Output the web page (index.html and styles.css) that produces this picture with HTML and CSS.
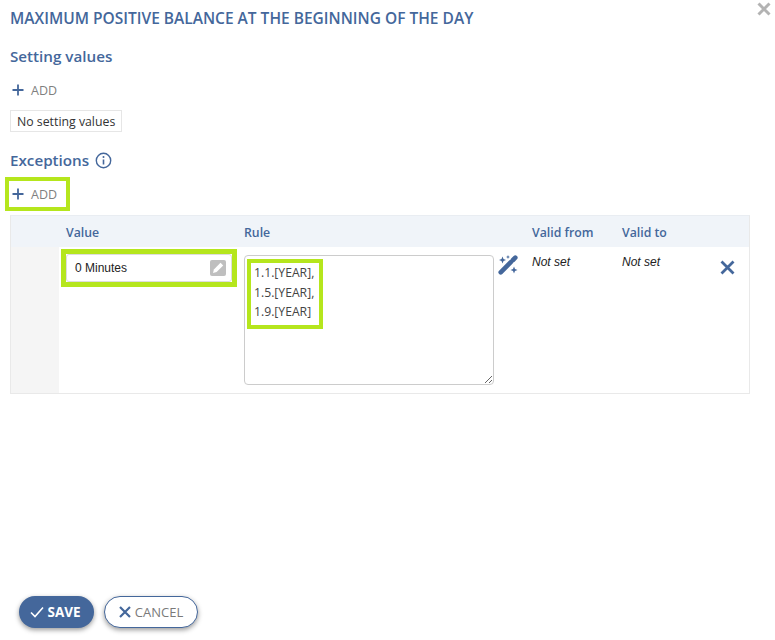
FILE: index.html

```html
<!DOCTYPE html>
<html lang="en">
<head>
  <meta charset="UTF-8" />
  <title>Maximum positive balance</title>
  <link rel="stylesheet" href="styles.css">
</head>
<body>
  <button class="close" aria-label="Close">
    <svg width="14" height="14" viewBox="0 0 14 14"><path d="M1.5 1.5l11 11M12.5 1.5l-11 11" stroke="#b3b3b3" stroke-width="3" fill="none"/></svg>
  </button>

  <h1>MAXIMUM POSITIVE BALANCE AT THE BEGINNING OF THE DAY</h1>

  <h2 class="first">Setting values</h2>
  <div class="add">
    <svg width="12" height="12" viewBox="0 0 12 12"><path d="M6 .5v11M.5 6h11" stroke="#44679b" stroke-width="1.8" fill="none"/></svg>
    <span>ADD</span>
  </div>
  <div class="empty">No setting values</div>

  <h2 class="exceptions">Exceptions
    <svg width="17" height="17" viewBox="0 0 17 17"><circle cx="8.5" cy="8.5" r="7.2" stroke="#44679b" stroke-width="1.4" fill="none"/><path d="M8.5 7.5v5" stroke="#44679b" stroke-width="1.6"/><circle cx="8.5" cy="5" r="1" fill="#44679b"/></svg>
  </h2>
  <div class="add marked">
    <svg width="12" height="12" viewBox="0 0 12 12"><path d="M6 .5v11M.5 6h11" stroke="#44679b" stroke-width="1.8" fill="none"/></svg>
    <span>ADD</span>
  </div>

  <div class="table">
    <div class="row head">
      <div></div>
      <div class="th">Value</div>
      <div class="th">Rule</div>
      <div class="th">Valid from</div>
      <div class="th">Valid to</div>
      <div></div>
    </div>
    <div class="row body">
      <div class="gutter"></div>
      <div class="value-cell">
        <div class="value-mark">
          <div class="value-input">
            <span>0 Minutes</span>
            <svg width="16" height="16" viewBox="0 0 16 16"><rect width="16" height="16" rx="2" fill="#bfbfbf"/><path d="M3 13l.9-3.600L10.500 2.800l2.700 2.700-6.600 6.600z" fill="#fff"/></svg>
          </div>
        </div>
      </div>
      <div class="rule-cell">
        <div class="rule-box">
          <div class="rule-mark">1.1.[YEAR],<br>1.5.[YEAR],<br>1.9.[YEAR]</div>
        </div>
        <svg class="wand" width="20" height="20" viewBox="0 0 20 20">
          <path d="M2.700 17.300L12.800 7.200" stroke="#44679b" stroke-width="4.600" stroke-linecap="round"/>
          <path d="M15 5l2.300-2.300" stroke="#44679b" stroke-width="4.600" stroke-linecap="round"/>
          <path d="M4.500 1.500l1 2.500 2.500 1-2.500 1-1 2.500-1-2.500L1 5l2.500-1zM16 11.500l1 2.500 2.500 1-2.500 1-1 2.500-1-2.500-2.500-1 2.500-1zM10 0l.6 1.400L12 2l-1.400.6L10 4l-.6-1.400L8 2l1.400-.6z" fill="#44679b"/>
        </svg>
      </div>
      <div class="not-set">Not set</div>
      <div class="not-set">Not set</div>
      <div class="remove">
        <svg width="15" height="15" viewBox="0 0 15 15"><path d="M1.500 1.500l12 12M13.500 1.500l-12 12" stroke="#44679b" stroke-width="2.800" fill="none"/></svg>
      </div>
    </div>
  </div>

  <div class="actions">
    <button class="btn save">
      <svg width="14" height="12" viewBox="0 0 14 12"><path d="M1 6.500l4 4L13 1.500" stroke="#fff" stroke-width="1.600" fill="none"/></svg>
      SAVE
    </button>
    <button class="btn cancel">
      <svg width="12" height="12" viewBox="0 0 12 12"><path d="M1 1l10 10M11 1L1 11" stroke="#44679b" stroke-width="2.200" fill="none"/></svg>
      CANCEL
    </button>
  </div>
</body>
</html>
```

FILE: styles.css

```css
* { box-sizing: border-box; }
html, body { height: 100%; }
body { margin: 0; padding: 0 25px 0 10px; background: #fff; font-family: "Open Sans", sans-serif; color: #222; position: relative; overflow: hidden; }
h1 { margin: 0; padding-top: 9px; font-size: 15.500px; line-height: 19px; font-weight: 600; color: #44679b; white-space: nowrap; }
h2 { margin: 0; font-size: 15.200px; line-height: 20px; font-weight: 600; color: #44679b; }
h2.first { margin-top: 18px; }
h2.exceptions { margin-top: 18px; display: flex; align-items: center; gap: 6px; }
.close { position: absolute; top: 2px; right: 4px; padding: 0; border: 0; background: none; }
.add { display: flex; align-items: center; gap: 7px; margin-top: 14px; height: 20px; padding-left: 2px; font-size: 12.500px; font-weight: 500; color: #7f7f7f; }
.add.marked { width: 65px; height: 34px; margin: 7px 0 4px -5px; padding-left: 3px; border: 4px solid #b5e61d; }
.empty { display: inline-block; margin-top: 10px; height: 22px; padding: 1px 6px 0; border: 1px solid #e6e6e6; font-size: 12.300px; line-height: 20px; color: #333; vertical-align: top; }
.table { width: 740px; height: 179px; border: 1px solid #e9e9e9; border-top-color: #e9edf2; }
.row { display: grid; grid-template-columns: 48px 185px 288px 90px 90px 1fr; }
.head { height: 31px; background: #f0f4f9; }
.th { padding: 8px 0 0 7px; font-size: 12.300px; line-height: 17px; font-weight: 600; color: #44679b; }
.row .th:nth-child(3) { padding-left: 0; }
.row .th:nth-child(4), .row .th:nth-child(5) { padding-left: 0; }
.body { height: 146px; }
.gutter { background: #f5f5f5; }
.value-cell { padding: 2px 0 0 2px; }
.value-mark { width: 176px; height: 38px; border: 5px solid #b5e61d; }
.value-input { display: flex; align-items: center; justify-content: space-between; height: 28px; padding: 0 5px 0 8px; border: 1px solid #ddd; border-radius: 3px; font-family: "Liberation Sans", sans-serif; font-size: 12px; color: #222; }
.rule-cell { display: flex; gap: 4px; padding-top: 8px; }
.rule-box { width: 250px; height: 130px; padding: 3px 2px; border: 1px solid #ccc; border-radius: 4px; resize: both; overflow: hidden; }
.rule-mark { width: 76px; height: 70px; padding: 0 0 0 3px; border: 4px solid #b5e61d; font-size: 12.200px; line-height: 19.500px; color: #444; white-space: nowrap; }
.wand { flex: none; }
.not-set { padding-top: 7px; font-family: "Liberation Sans", sans-serif; font-size: 12px; line-height: 16px; font-style: italic; color: #222; }
.remove { padding: 11px 0 0 8px; }
.actions { position: absolute; left: 19px; top: 596px; display: flex; gap: 10px; }
.btn { display: flex; align-items: center; justify-content: center; height: 32px; border-radius: 16px; font-family: "Open Sans", sans-serif; font-size: 13px; box-shadow: 0 2px 5px rgba(0, 0, 0, .4); }
.save { width: 75px; gap: 3px; padding: 0 2px 0 0; border: 0; background: #44679b; color: #fff; font-size: 13.500px; font-weight: 700; }
.cancel { width: 94px; gap: 4px; padding: 0; border: 1px solid #44679b; background: #fff; color: #7a7a7a; }
```
